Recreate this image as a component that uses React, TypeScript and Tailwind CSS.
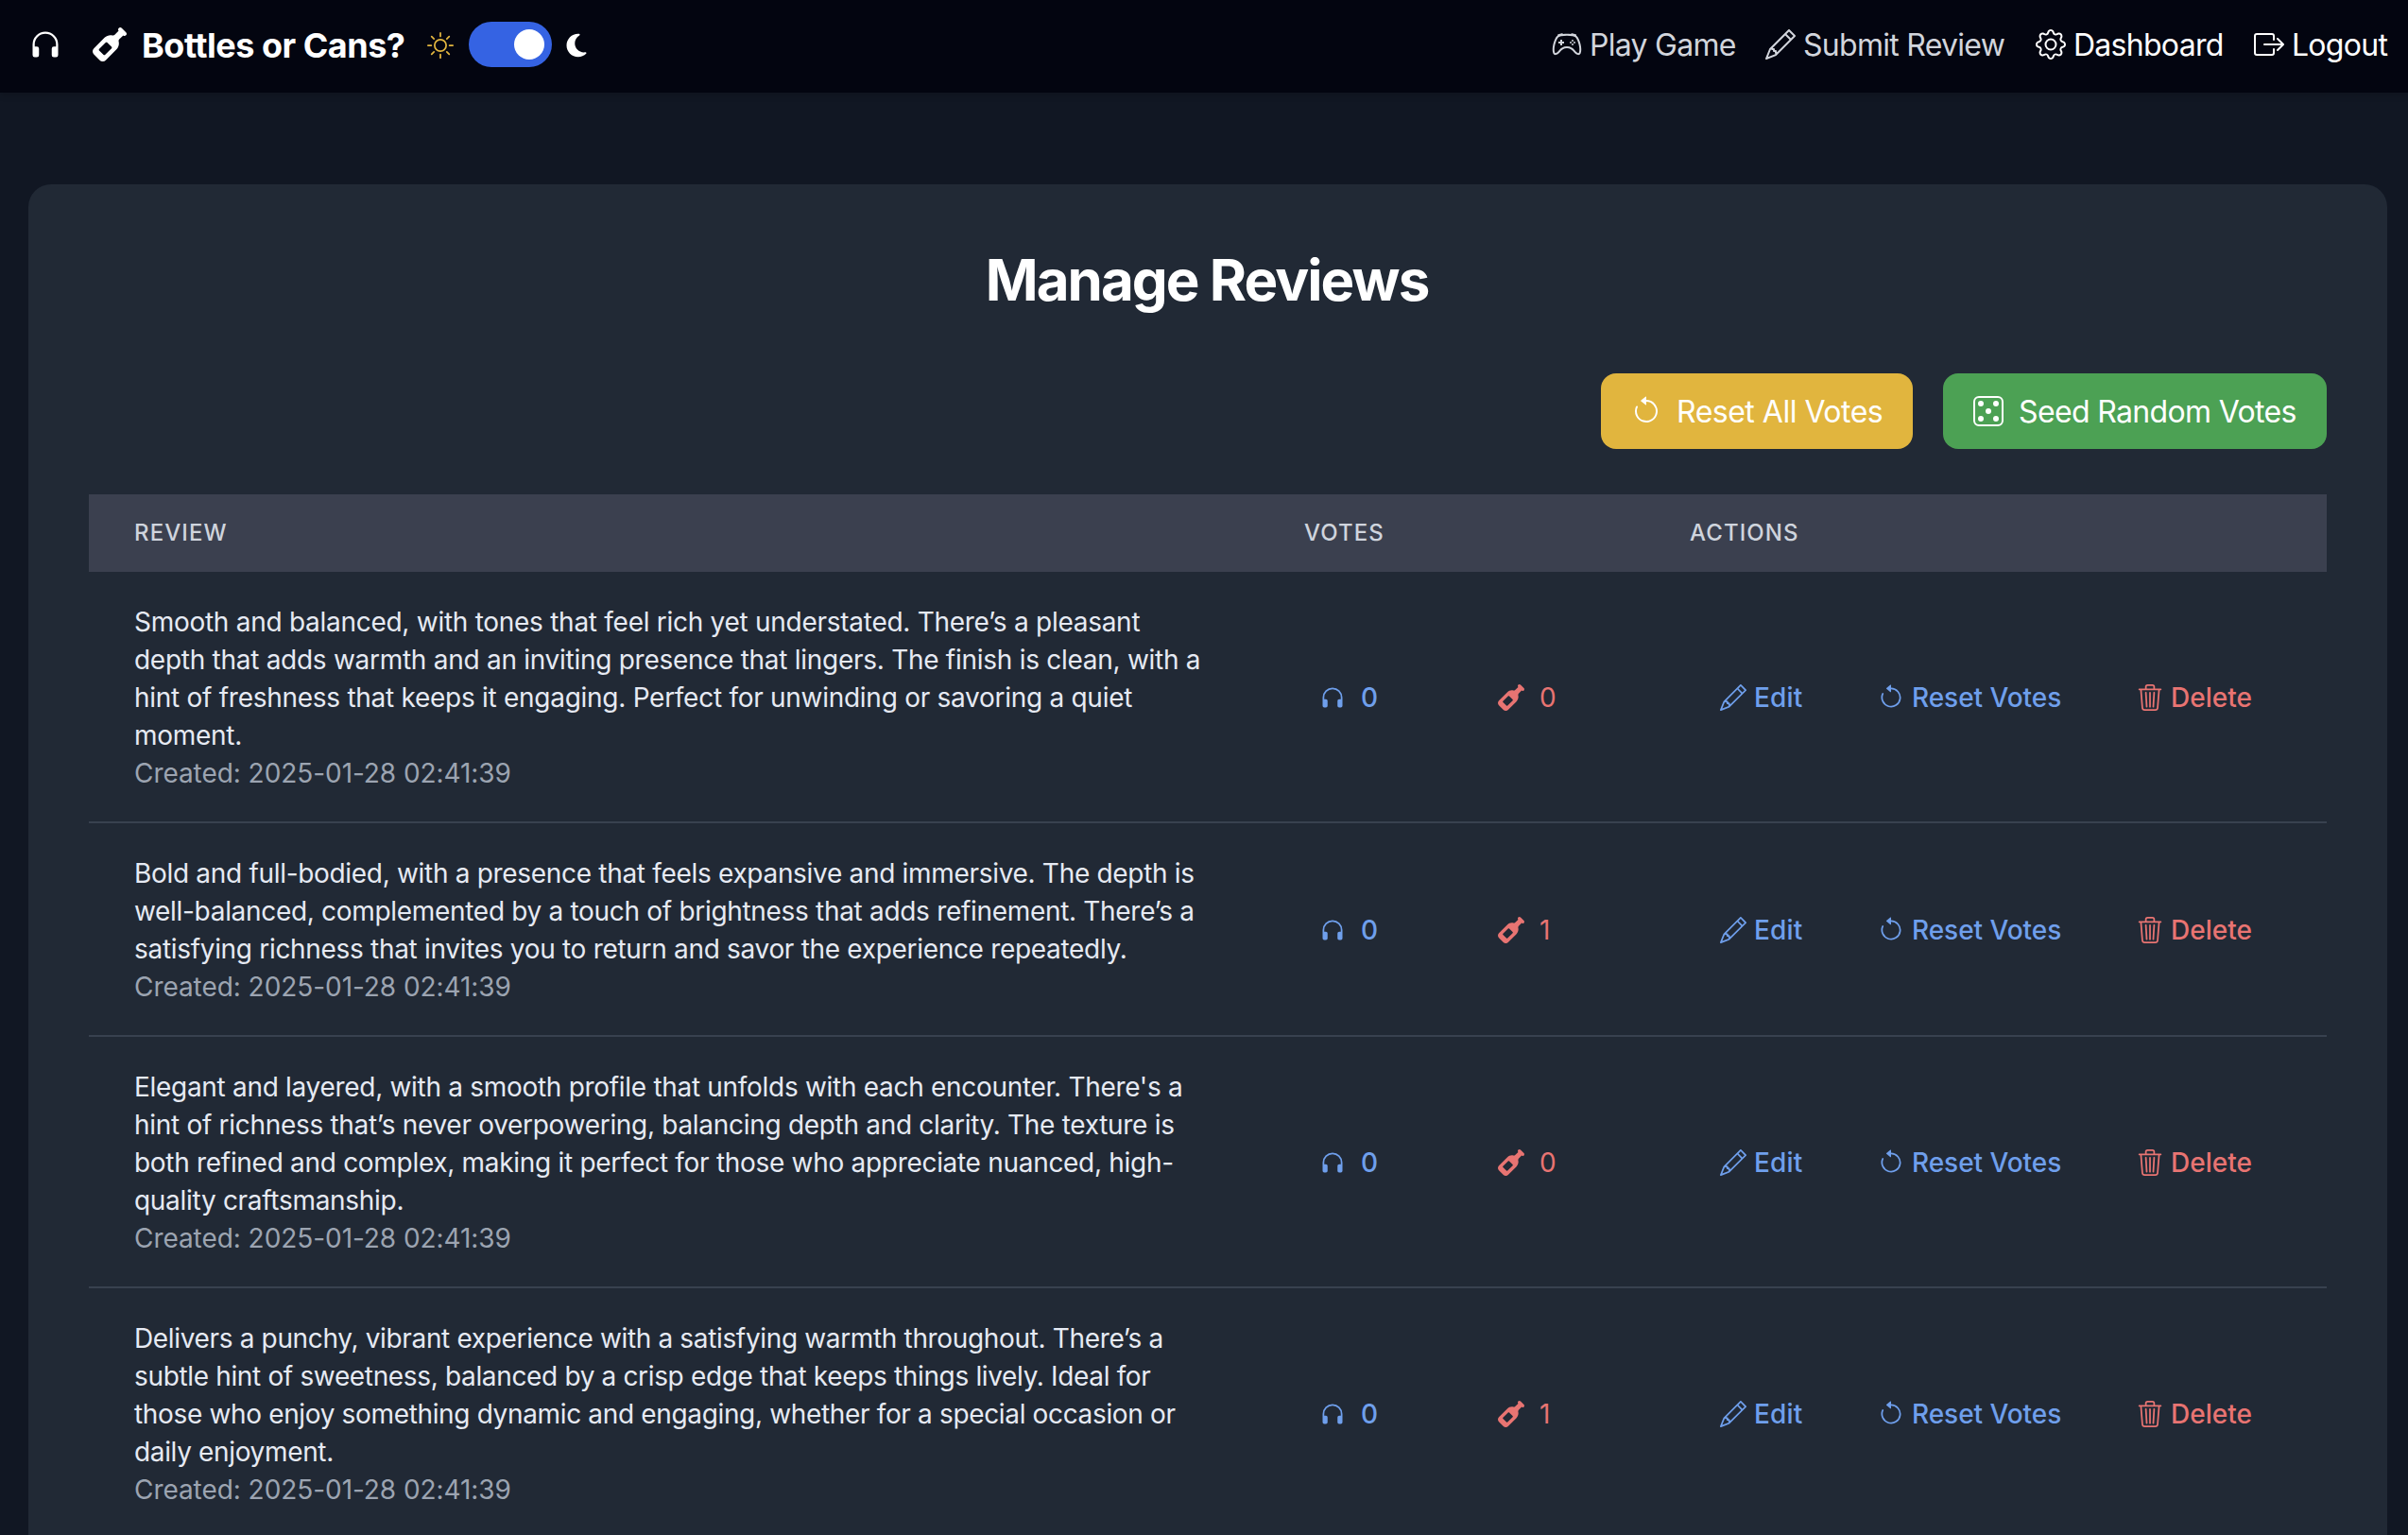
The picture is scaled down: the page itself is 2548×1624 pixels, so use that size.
import type { ReactNode } from "react";
import {
  BsArrowCounterclockwise,
  BsBoxArrowRight,
  BsController,
  BsDice5,
  BsGear,
  BsHeadphones,
  BsPencil,
  BsSun,
  BsTrash3,
} from "react-icons/bs";
import { FaMoon, FaWineBottle } from "react-icons/fa6";

type Review = {
  lines: string[];
  tracking: string;
  created: string;
  cans: number;
  bottles: number;
};

const reviews: Review[] = [
  {
    lines: [
      "Smooth and balanced, with tones that feel rich yet understated. There’s a pleasant",
      "depth that adds warmth and an inviting presence that lingers. The finish is clean, with a",
      "hint of freshness that keeps it engaging. Perfect for unwinding or savoring a quiet",
      "moment.",
    ],
    tracking: "tracking-[-0.275px]",
    created: "2025-01-28 02:41:39",
    cans: 0,
    bottles: 0,
  },
  {
    lines: [
      "Bold and full-bodied, with a presence that feels expansive and immersive. The depth is",
      "well-balanced, complemented by a touch of brightness that adds refinement. There’s a",
      "satisfying richness that invites you to return and savor the experience repeatedly.",
    ],
    tracking: "tracking-[-0.31px]",
    created: "2025-01-28 02:41:39",
    cans: 0,
    bottles: 1,
  },
  {
    lines: [
      "Elegant and layered, with a smooth profile that unfolds with each encounter. There's a",
      "hint of richness that’s never overpowering, balancing depth and clarity. The texture is",
      "both refined and complex, making it perfect for those who appreciate nuanced, high-",
      "quality craftsmanship.",
    ],
    tracking: "tracking-[-0.3px]",
    created: "2025-01-28 02:41:39",
    cans: 0,
    bottles: 0,
  },
  {
    lines: [
      "Delivers a punchy, vibrant experience with a satisfying warmth throughout. There’s a",
      "subtle hint of sweetness, balanced by a crisp edge that keeps things lively. Ideal for",
      "those who enjoy something dynamic and engaging, whether for a special occasion or",
      "daily enjoyment.",
    ],
    tracking: "tracking-[-0.345px]",
    created: "2025-01-28 02:41:39",
    cans: 0,
    bottles: 1,
  },
];

function NavItem({ icon, label, className }: { icon: ReactNode; label: string; className: string }) {
  return (
    <a className={`flex items-center gap-2 whitespace-nowrap text-[32px] leading-[48px] tracking-[-0.72px] ${className}`}>
      {icon}
      <span className="pt-0.5">{label}</span>
    </a>
  );
}

function Header() {
  return (
    <header className="flex h-[98px] items-center justify-between bg-[#030510] pr-[22px] pb-1 pl-[30px] shadow-[0_4px_6px_rgba(0,0,0,0.12)]">
      <div className="flex items-center text-white">
        <BsHeadphones className="size-9" />
        <FaWineBottle className="ml-8 size-9" />
        <span className="ml-4 w-[302px] shrink-0 whitespace-nowrap pt-0.5 text-[36px] leading-[48px] font-bold tracking-[-0.5px]">
          Bottles or Cans?
        </span>
        <BsSun className="mt-0.5 size-7 text-[#e2b63f]" />
        <div className="ml-4 flex h-12 w-[88px] items-center justify-end rounded-full bg-[#3563e3] px-2">
          <div className="size-8 rounded-full bg-white" />
        </div>
        <FaMoon className="mt-0.5 ml-3 size-7" />
      </div>
      <nav className="flex items-center gap-8">
        <NavItem className="w-[194px] text-[#d2d5dc]" icon={<BsController className="size-8 shrink-0" />} label="Play Game" />
        <NavItem className="w-[254px] text-[#d2d5dc]" icon={<BsPencil className="size-8 shrink-0" />} label="Submit Review" />
        <NavItem className="w-[199px] text-white" icon={<BsGear className="size-8 shrink-0" />} label="Dashboard" />
        <NavItem className="w-[141px] text-white" icon={<BsBoxArrowRight className="size-8 shrink-0" />} label="Logout" />
      </nav>
    </header>
  );
}

function Row({ review }: { review: Review }) {
  return (
    <div className="grid grid-cols-[1238px_408px_722px] border-b-2 border-[#38414f] text-[28px] leading-10">
      <div className={`pt-[33px] pb-[31px] pl-12 whitespace-nowrap text-[#e6eaf3] ${review.tracking}`}>
        {review.lines.map((line) => (
          <p key={line}>{line}</p>
        ))}
        <p className="tracking-[-0.06px] text-[#9ca4b1]">Created: {review.created}</p>
      </div>
      <div className="flex items-center pt-px pl-16">
        <div className="flex w-[189px] items-center gap-4 font-medium text-[#6f9fec]">
          <BsHeadphones className="size-7" />
          <span>{review.cans}</span>
        </div>
        <div className="flex items-center gap-4 text-[#e87472]">
          <FaWineBottle className="size-7" />
          <span>{review.bottles}</span>
        </div>
      </div>
      <div className="flex items-center pt-px pl-20 font-medium">
        <button className="flex w-[167px] items-center gap-2 tracking-[0.2px] text-[#6f9fec]">
          <BsPencil className="size-7" />
          <span>Edit</span>
        </button>
        <button className="flex w-[274px] items-center gap-2 tracking-[-0.05px] text-[#6f9fec]">
          <BsArrowCounterclockwise className="size-7" />
          <span>Reset Votes</span>
        </button>
        <button className="flex items-center gap-2 text-[#e87472]">
          <BsTrash3 className="size-7" />
          <span>Delete</span>
        </button>
      </div>
    </div>
  );
}

export default function App() {
  return (
    <div className="h-[1624px] overflow-hidden bg-[#111723] font-[Inter,sans-serif]">
      <Header />
      <main className="mt-[97px] mr-[22px] ml-[30px] rounded-3xl bg-[#212935] px-16 pt-[63px] pb-16">
        <h1 className="pr-0.5 text-center text-[60px] leading-[76px] font-bold tracking-[-1.95px] text-white">
          Manage Reviews
        </h1>
        <div className="mt-[61px] flex justify-end gap-8 text-[32px] tracking-[-0.65px] text-white">
          <button className="flex h-20 w-[330px] items-center gap-4 rounded-2xl bg-[#e1b53e] pl-8 whitespace-nowrap">
            <BsArrowCounterclockwise className="size-8 shrink-0" />
            <span className="pt-px tracking-[-0.5px]">Reset All Votes</span>
          </button>
          <button className="flex h-20 w-[406px] items-center gap-4 rounded-2xl bg-[#4ca154] pl-8 whitespace-nowrap">
            <BsDice5 className="size-8 shrink-0" />
            <span className="pt-px">Seed Random Votes</span>
          </button>
        </div>
        <div className="mt-12">
          <div className="grid h-[82px] grid-cols-[1238px_408px_722px] items-center bg-[#3b404f] text-[24px] leading-8 font-medium tracking-[1.08px] text-[#cfd4dd]">
            <span className="pl-12">REVIEW</span>
            <span className="pl-12">VOTES</span>
            <span className="pl-12">ACTIONS</span>
          </div>
          {reviews.map((review) => (
            <Row key={review.lines[0]} review={review} />
          ))}
        </div>
      </main>
    </div>
  );
}
